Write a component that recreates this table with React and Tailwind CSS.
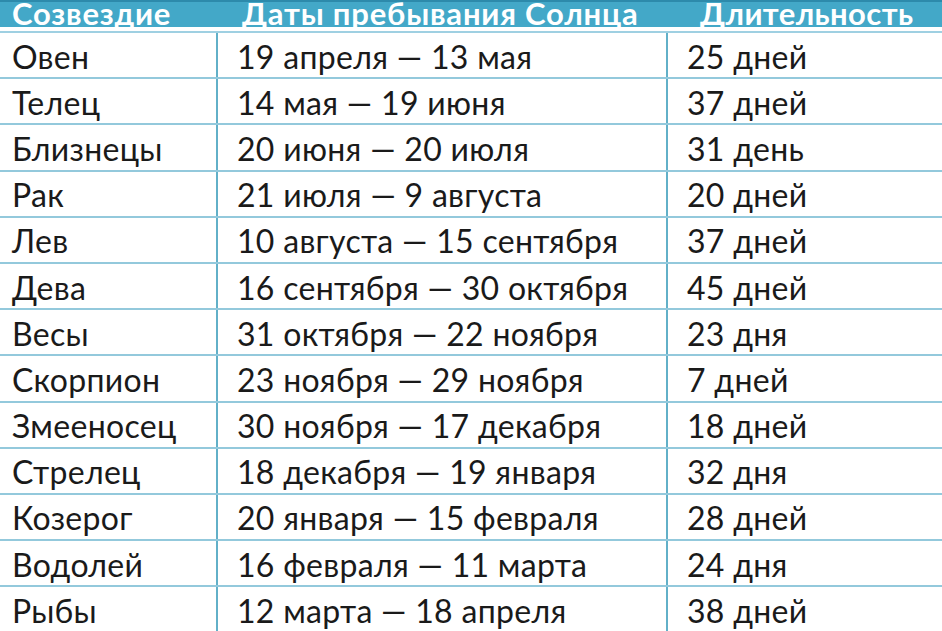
const rows = [
  ["Овен", "19 апреля — 13 мая", "25 дней"],
  ["Телец", "14 мая — 19 июня", "37 дней"],
  ["Близнецы", "20 июня — 20 июля", "31 день"],
  ["Рак", "21 июля — 9 августа", "20 дней"],
  ["Лев", "10 августа — 15 сентября", "37 дней"],
  ["Дева", "16 сентября — 30 октября", "45 дней"],
  ["Весы", "31 октября — 22 ноября", "23 дня"],
  ["Скорпион", "23 ноября — 29 ноября", "7 дней"],
  ["Змееносец", "30 ноября — 17 декабря", "18 дней"],
  ["Стрелец", "18 декабря — 19 января", "32 дня"],
  ["Козерог", "20 января — 15 февраля", "28 дней"],
  ["Водолей", "16 февраля — 11 марта", "24 дня"],
  ["Рыбы", "12 марта — 18 апреля", "38 дней"],
];

const App = () => {
  return (
    <div className="w-[942px] h-[631px] overflow-hidden bg-white font-['Lato',sans-serif]">
      {/* header, text sits low and its tops are cropped like the source */}
      <div className="h-[27px] bg-[#43a8c8] border-t-2 border-[#2d8aab] grid grid-cols-[218px_450px_1fr] items-start text-white font-bold text-[31px] tracking-[0.8px] leading-none overflow-hidden">
        <div className="pl-[12px] mt-[-4px]">Созвездие</div>
        <div className="pl-[24px] mt-[-4px]">Даты пребывания Солнца</div>
        <div className="pl-[32px] mt-[-4px] tracking-[0.4px]">Длительность</div>
      </div>
      <div className="h-[6px] border-b-2 border-[#9fd0e2]"></div>

      {rows.map((r) => (
        <div
          key={r[0]}
          className="h-[46.2px] grid grid-cols-[218px_450px_1fr] border-b-2 border-[#93c9dc] text-[#1a1a1a] text-[32px] tracking-[0.3px] leading-none"
        >
          <div className="flex items-center pt-[3px] pl-[12px] border-r-2 border-[#62b0c8]">{r[0]}</div>
          <div className="flex items-center pt-[3px] pl-[19px] border-r-2 border-[#62b0c8]">{r[1]}</div>
          <div className="flex items-center pt-[3px] pl-[19px]">{r[2]}</div>
        </div>
      ))}
    </div>
  );
};

export default App;
